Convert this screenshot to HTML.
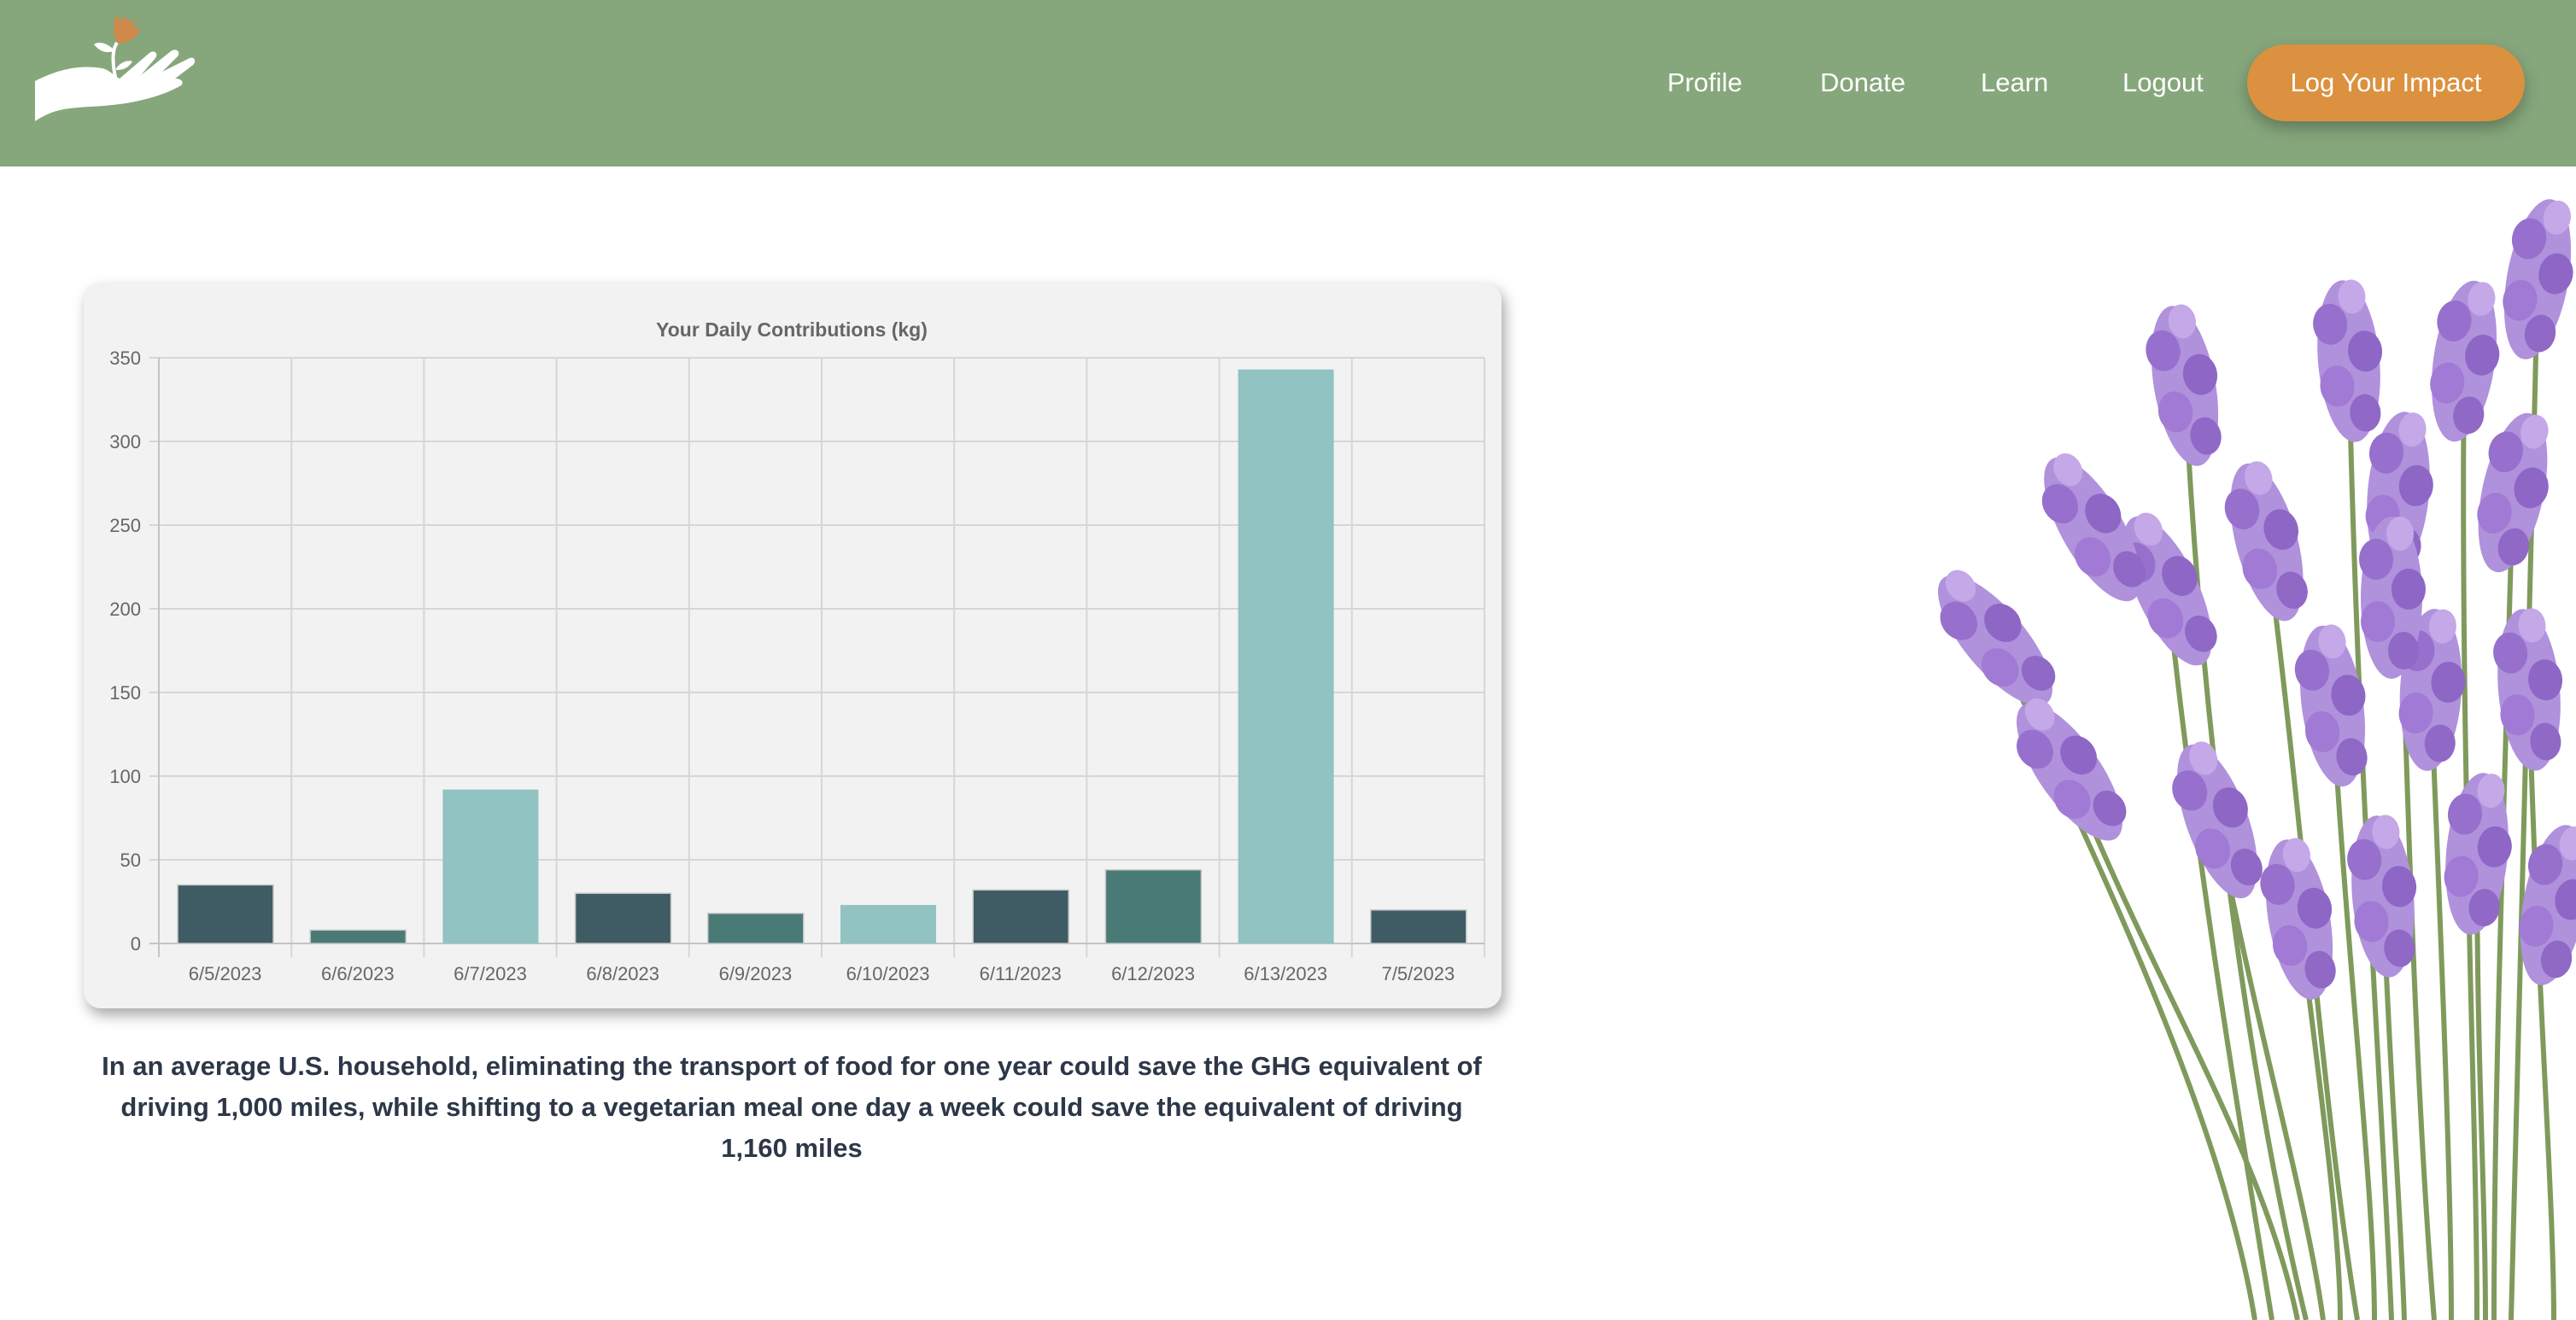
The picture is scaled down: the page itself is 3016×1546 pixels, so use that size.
<!DOCTYPE html>
<html><head><meta charset="utf-8">
<style>
html,body{margin:0;padding:0;width:3016px;height:1546px;overflow:hidden;background:#fff;font-family:"Liberation Sans",Arial,sans-serif;}
.hdr{position:absolute;left:0;top:0;width:3016px;height:195px;background:#86a77c;}
.nav{position:absolute;top:97px;transform:translateY(-50%);color:#fff;font-size:31px;font-weight:500;}
.btn{position:absolute;left:2631px;top:52px;width:325px;height:90px;border-radius:45px;background:#db9140;color:#fff;font-size:31px;font-weight:500;display:flex;align-items:center;justify-content:center;box-shadow:0 8px 18px rgba(0,0,0,0.28);}
.card{position:absolute;left:98px;top:331px;width:1660px;height:850px;background:#f2f2f2;border-radius:20px;box-shadow:4px 8px 16px rgba(0,0,0,0.35);}
.txt{position:absolute;left:27px;width:1800px;top:1225px;text-align:center;font-size:31px;font-weight:700;color:#2d3748;line-height:48px;white-space:nowrap;}
</style></head><body>
<div class="hdr"></div>
<svg style="position:absolute;left:0;top:0" width="260" height="195" viewBox="0 0 260 195">
<path d="M41 95 C70 80 95 76 120 80 C130 83 135 90 140 92 L175 62 C180 58 186 62 182 68 L165 88 L200 60 C206 56 212 60 208 66 L190 84 L222 68 C228 66 230 72 226 76 L205 92 C212 92 216 96 212 100 C195 110 170 118 140 122 C110 126 80 124 60 132 C50 136 44 140 41 142 Z" fill="#fff"/>
<path d="M137 50 C130 60 132 80 137 98" stroke="#fff" stroke-width="4" fill="none"/>
<path d="M133 58 C125 50 115 48 110 52 C118 62 126 62 133 60 Z" fill="#fff"/>
<path d="M136 80 C142 72 150 70 155 72 C150 80 144 82 136 82 Z" fill="#fff"/>
<path d="M137 50 C132 42 132 30 136 16 L141 25 L146 18 L150 26 L158 22 L156 32 L165 34 C160 44 150 52 137 50 Z" fill="#cf8a4c"/>
</svg>
<div class="nav" style="left:1952px">Profile</div>
<div class="nav" style="left:2131px">Donate</div>
<div class="nav" style="left:2319px">Learn</div>
<div class="nav" style="left:2485px">Logout</div>
<div class="btn">Log Your Impact</div>

<div class="card"></div>
<svg style="position:absolute;left:0;top:0" width="1800" height="1200" viewBox="0 0 1800 1200" font-family="Liberation Sans, Arial, sans-serif">
<text x="927" y="394" text-anchor="middle" font-size="23" font-weight="700" fill="#666">Your Daily Contributions (kg)</text>
<g stroke="#d6d6d6" stroke-width="2">
<line x1="175" y1="419" x2="1738" y2="419"/><line x1="175" y1="517" x2="1738" y2="517"/><line x1="175" y1="615" x2="1738" y2="615"/><line x1="175" y1="713" x2="1738" y2="713"/><line x1="175" y1="811" x2="1738" y2="811"/><line x1="175" y1="909" x2="1738" y2="909"/><line x1="175" y1="1007" x2="1738" y2="1007"/>
<line x1="341.2" y1="419" x2="341.2" y2="1121"/><line x1="496.4" y1="419" x2="496.4" y2="1121"/><line x1="651.6" y1="419" x2="651.6" y2="1121"/><line x1="806.8" y1="419" x2="806.8" y2="1121"/><line x1="962" y1="419" x2="962" y2="1121"/><line x1="1117.2" y1="419" x2="1117.2" y2="1121"/><line x1="1272.4" y1="419" x2="1272.4" y2="1121"/><line x1="1427.6" y1="419" x2="1427.6" y2="1121"/><line x1="1582.8" y1="419" x2="1582.8" y2="1121"/><line x1="1738" y1="419" x2="1738" y2="1121"/>
</g>
<g stroke="#c4c4c4" stroke-width="2"><line x1="186" y1="419" x2="186" y2="1121"/><line x1="175" y1="1105" x2="1738" y2="1105"/></g>
<g stroke="#c8c8c8" stroke-width="1.5">
<rect x="208" y="1036.4" width="112" height="68.6" fill="#3f5c64"/>
<rect x="363.2" y="1089.3" width="112" height="15.7" fill="#497a76"/>
<rect x="518.4" y="924.7" width="112" height="180.3" fill="#90c3c2" stroke="none"/>
<rect x="673.6" y="1046.2" width="112" height="58.8" fill="#3f5c64"/>
<rect x="828.8" y="1069.7" width="112" height="35.3" fill="#497a76"/>
<rect x="984" y="1059.9" width="112" height="45.1" fill="#90c3c2" stroke="none"/>
<rect x="1139.2" y="1042.3" width="112" height="62.7" fill="#3f5c64"/>
<rect x="1294.4" y="1018.8" width="112" height="86.2" fill="#497a76"/>
<rect x="1449.6" y="432.7" width="112" height="672.3" fill="#90c3c2" stroke="none"/>
<rect x="1604.8" y="1065.8" width="112" height="39.2" fill="#3f5c64"/>
</g>
<g font-size="22" fill="#666" text-anchor="end">
<text x="165" y="427">350</text><text x="165" y="525">300</text><text x="165" y="623">250</text><text x="165" y="721">200</text><text x="165" y="819">150</text><text x="165" y="917">100</text><text x="165" y="1015">50</text><text x="165" y="1113">0</text>
</g>
<g font-size="22" fill="#666" text-anchor="middle">
<text x="263.6" y="1148">6/5/2023</text><text x="418.8" y="1148">6/6/2023</text><text x="574" y="1148">6/7/2023</text><text x="729.2" y="1148">6/8/2023</text><text x="884.4" y="1148">6/9/2023</text><text x="1039.6" y="1148">6/10/2023</text><text x="1194.8" y="1148">6/11/2023</text><text x="1350" y="1148">6/12/2023</text><text x="1505.2" y="1148">6/13/2023</text><text x="1660.4" y="1148">7/5/2023</text>
</g>
</svg>
<div class="txt">In an average U.S. household, eliminating the transport of food for one year could save the GHG equivalent of<br>driving 1,000 miles, while shifting to a vegetarian meal one day a week could save the equivalent of driving<br>1,160 miles</div>

<svg style="position:absolute;left:0;top:0" width="3016" height="1546" viewBox="0 0 3016 1546">
<defs>
<g id="h">
<ellipse cx="0" cy="0" rx="36" ry="95" fill="#b091dc"/>
<ellipse cx="-18" cy="-45" rx="20" ry="24" fill="#9670cc"/>
<ellipse cx="20" cy="-10" rx="20" ry="24" fill="#8e66c6"/>
<ellipse cx="-16" cy="28" rx="20" ry="24" fill="#a07ad4"/>
<ellipse cx="14" cy="62" rx="18" ry="22" fill="#9068c6"/>
<ellipse cx="10" cy="-75" rx="16" ry="20" fill="#c4a8e8"/>
</g>
</defs>
<g stroke="#7f9a5c" stroke-width="6" fill="none">
<path d="M2336 750 C2450 1000 2600 1300 2640 1546"/>
<path d="M2423 904 C2520 1150 2650 1350 2690 1546"/>
<path d="M2558 452 C2580 900 2640 1300 2700 1546"/>
<path d="M2654 635 C2700 1000 2720 1300 2760 1546"/>
<path d="M2750 423 C2760 900 2790 1300 2800 1546"/>
<path d="M2808 577 C2820 1000 2830 1300 2850 1546"/>
<path d="M2885 423 C2880 900 2900 1300 2900 1546"/>
<path d="M2971 327 C2960 800 2950 1300 2940 1546"/>
<path d="M2596 962 C2640 1200 2700 1400 2720 1546"/>
<path d="M2731 827 C2750 1150 2780 1400 2780 1546"/>
<path d="M2846 808 C2860 1150 2870 1400 2870 1546"/>
<path d="M2942 577 C2930 1000 2920 1300 2920 1546"/>
<path d="M2538 692 C2570 1000 2620 1300 2660 1546"/>
<path d="M2961 808 C2970 1150 2990 1400 2990 1546"/>
<path d="M2692 1077 C2720 1300 2740 1450 2740 1546"/>
<path d="M2900 1000 C2900 1250 2910 1400 2910 1546"/>
<path d="M2790 1050 C2800 1300 2810 1400 2815 1546"/>
</g>
<use href="#h" transform="translate(2336 750) rotate(-40)"/>
<use href="#h" transform="translate(2423 904) rotate(-35)"/>
<use href="#h" transform="translate(2558 452) rotate(-10)"/>
<use href="#h" transform="translate(2654 635) rotate(-15)"/>
<use href="#h" transform="translate(2750 423) rotate(-5)"/>
<use href="#h" transform="translate(2808 577) rotate(5)"/>
<use href="#h" transform="translate(2885 423) rotate(8)"/>
<use href="#h" transform="translate(2971 327) rotate(10)"/>
<use href="#h" transform="translate(2596 962) rotate(-20)"/>
<use href="#h" transform="translate(2731 827) rotate(-8)"/>
<use href="#h" transform="translate(2846 808) rotate(3)"/>
<use href="#h" transform="translate(2942 577) rotate(12)"/>
<use href="#h" transform="translate(2538 692) rotate(-25)"/>
<use href="#h" transform="translate(2961 808) rotate(-5)"/>
<use href="#h" transform="translate(2692 1077) rotate(-10)"/>
<use href="#h" transform="translate(2450 620) rotate(-30)"/>
<use href="#h" transform="translate(2800 700) rotate(0)"/>
<use href="#h" transform="translate(2900 1000) rotate(5)"/>
<use href="#h" transform="translate(2790 1050) rotate(-5)"/>
<use href="#h" transform="translate(2990 1060) rotate(10)"/>
</svg>
</body></html>
